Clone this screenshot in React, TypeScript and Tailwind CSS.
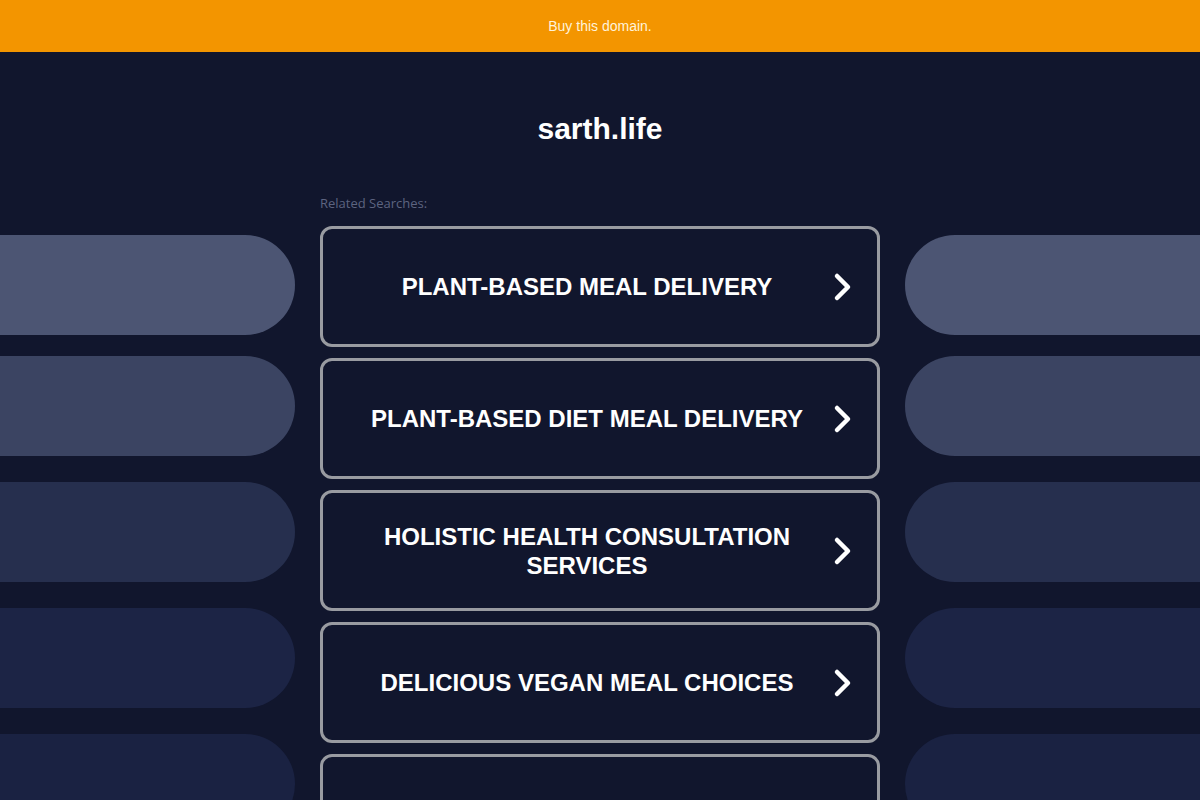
import React from 'react';

const searches: string[] = [
    'Plant-Based Meal Delivery',
    'Plant-Based Diet Meal Delivery',
    'Holistic Health Consultation Services',
    'Delicious Vegan Meal Choices',
    'Organic Vegan Food Delivery',
];

// chap va o'ng tomondagi bezak "pill"lari
const pills = [
    { color: 'bg-[#4c5573]', top: 'mt-0' },
    { color: 'bg-[#3b4462]', top: 'mt-[21px]' },
    { color: 'bg-[#262f4e]', top: 'mt-[26px]' },
    { color: 'bg-[#1c2445]', top: 'mt-[26px]' },
    { color: 'bg-[#1a2242]', top: 'mt-[26px]' },
];

const Chevron: React.FC = () => (
    <svg width="24" height="30" viewBox="0 0 24 30" fill="none">
        <path d="M6 4 L17 15 L6 26" stroke="white" strokeWidth="4.5" strokeLinecap="round" strokeLinejoin="round" />
    </svg>
);

const SideColumn: React.FC<{ side: 'left' | 'right' }> = ({ side }) => (
    <div className="w-[295px] shrink-0 flex flex-col pt-[183px]">
        {pills.map((p, i) => (
            <div
                key={i}
                className={`h-[100px] shrink-0 ${p.color} ${p.top} ${side === 'left' ? 'rounded-r-[50px]' : 'rounded-l-[50px]'}`}
            />
        ))}
    </div>
);

const App: React.FC = () => {
    return (
        <div className="w-[1200px] h-[800px] overflow-hidden bg-[#11162d] font-['Liberation_Sans',Arial,sans-serif]">
            <div className="h-[52px] bg-[#f39500] flex items-center justify-center">
                <span className="text-[14px] text-[#fff3da]">Buy this domain.</span>
            </div>

            <div className="flex gap-[25px]">
                <SideColumn side="left" />

                <div className="w-[560px] shrink-0 flex flex-col">
                    <h1 className="mt-[59px] h-[36px] text-center text-[30px] font-bold text-white leading-[36px]">sarth.life</h1>
                    <div className="mt-[48px] text-[13px] text-[#5d6480] font-['Open_Sans',sans-serif] leading-[16px]">Related Searches:</div>
                    <div className="mt-[15px] flex flex-col gap-[11px]">
                        {searches.map((s, i) => (
                            <div
                                key={i}
                                className="h-[121px] shrink-0 border-[3px] border-[#999ba1] rounded-[12px] flex items-center"
                            >
                                <div className="flex-1 pl-[28px] pr-[8px] text-center text-[24px] font-bold uppercase text-white leading-[29px]">
                                    {s}
                                </div>
                                <div className="w-[24px] mr-[22px] flex items-center">
                                    <Chevron />
                                </div>
                            </div>
                        ))}
                    </div>
                </div>

                <SideColumn side="right" />
            </div>
        </div>
    );
};

export default App;
